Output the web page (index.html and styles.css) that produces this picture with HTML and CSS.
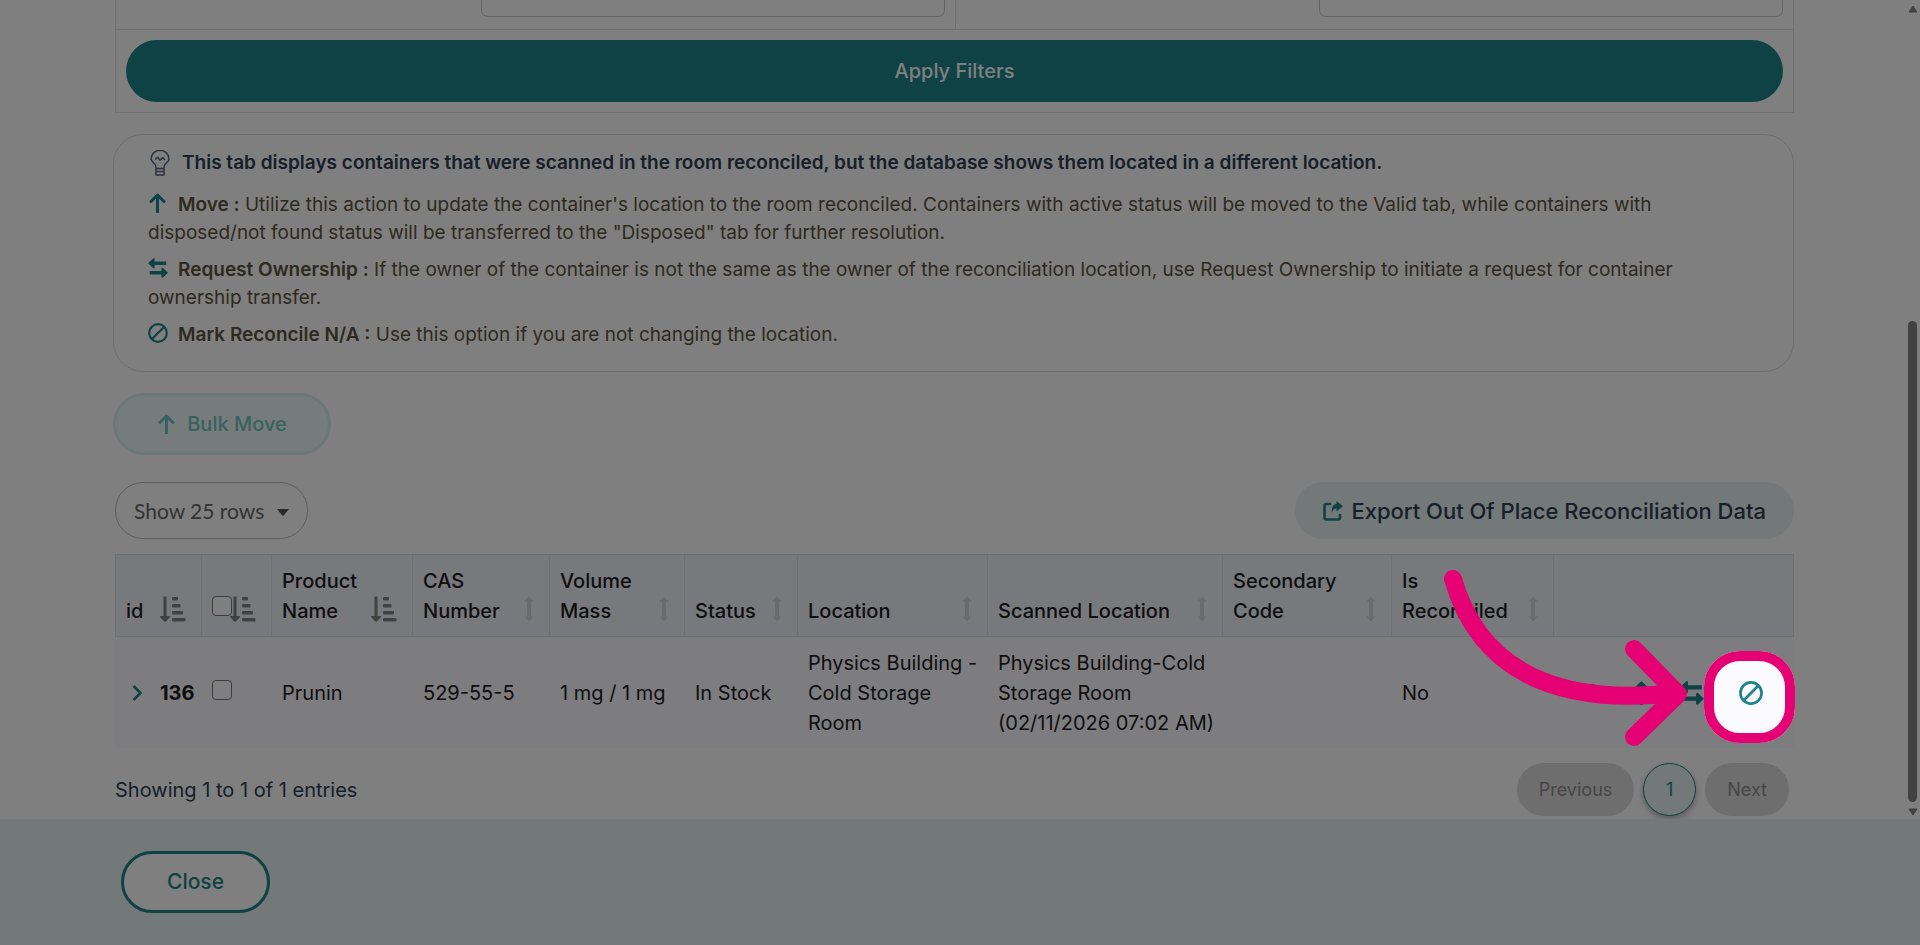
FILE: index.html
```html
<!DOCTYPE html>
<html lang="en">
<head>
    <meta charset="UTF-8">
    <meta name="viewport" content="width=device-width, initial-scale=1.0">
    <title>Out Of Place Reconciliation</title>
    <link rel="stylesheet" href="styles.css">
</head>
<body>
    <!-- shared icons -->
    <svg class="sprite" aria-hidden="true">
        <symbol id="icon-up" viewBox="0 0 20 20"><path d="M9.500 19V3M3 8.500 9.500 2l6.500 6.500" fill="none" stroke="currentColor" stroke-width="3" stroke-linecap="round" stroke-linejoin="round"/></symbol>
        <symbol id="icon-swap" viewBox="0 0 20 20"><path d="M0 5.300 5 .5c.8-.6 1.600-.2 1.600.7v2.300h11.600v3.600H6.600v2.300c0 .9-.8 1.200-1.600.6zM20 14.700l-5 4.800c-.8.6-1.600.2-1.600-.7v-2.300H1.800v-3.600h11.600v-2.300c0-.9.800-1.200 1.600-.6z" fill="currentColor"/></symbol>
        <symbol id="icon-ban" viewBox="0 0 20 20"><path d="M4.200 15.800 15.800 4.200" stroke="currentColor" stroke-width="2.200"/><circle cx="10" cy="10" r="8.800" fill="none" stroke="currentColor" stroke-width="2.200"/></symbol>
        <symbol id="icon-sort-amount" viewBox="0 0 26 26"><path d="M3.500 0.500h3v19.500h3.200c.6 0 .8.500.4 1l-4.200 4.500c-.5.500-1.200.5-1.700 0L0 21c-.4-.5-.2-1 .4-1h3.100z" fill="currentColor"/><rect x="12" y="1" width="6" height="3.500" rx="1" fill="currentColor"/><rect x="12" y="8" width="8.500" height="3.500" rx="1" fill="currentColor"/><rect x="12" y="15" width="11" height="3.500" rx="1" fill="currentColor"/><rect x="12" y="22" width="13.500" height="3.500" rx="1" fill="currentColor"/></symbol>
        <symbol id="icon-sort" viewBox="0 0 10 26"><path d="M5 .5 9.600 5.500H7v15h2.600L5 25.500.4 20.500H3v-15H.4z" fill="currentColor"/></symbol>
        <symbol id="icon-eye" viewBox="0 0 24 24"><circle cx="12" cy="12" r="7.500" fill="none" stroke="currentColor" stroke-width="3"/></symbol>
    </svg>

    <main class="content">
        <div class="page">
            <div class="filters">
                <div class="filter-row">
                    <div class="filter-cell"><input type="text" class="filter-input" aria-label="First filter"></div>
                    <div class="filter-cell"><input type="text" class="filter-input" aria-label="Second filter"></div>
                </div>
                <div class="filter-submit">
                    <button type="button" class="btn btn-apply">Apply Filters</button>
                </div>
            </div>

            <section class="info">
                <h2 class="info-title">
                    <svg class="bulb" viewBox="0 0 20 26" fill="none" stroke="currentColor" stroke-width="1.500" stroke-linejoin="round"><path d="M6 18.500v-1.500c0-2-1-2.600-2.600-4.300A8.600 8.600 0 0 1 1 9a8.900 8.600 0 0 1 18 0c0 1.600-1 2.800-2.400 3.700C15 14.400 14 15 14 17v1.500zM6 18.500V25h8v-6.500M6 21.500h8M5 9.500l2.700-2.200 2.300 3 2.700-2.700L15 10"/></svg>
                    This tab displays containers that were scanned in the room reconciled, but the database shows them located in a different location.
                </h2>
                <p><svg class="info-icon"><use href="#icon-up"/></svg><b>Move :</b> Utilize this action to update the container's location to the room reconciled. Containers with active status will be moved to the Valid tab, while containers with disposed/not found status will be transferred to the "Disposed" tab for further resolution.</p>
                <p><svg class="info-icon"><use href="#icon-swap"/></svg><b>Request Ownership :</b> If the owner of the container is not the same as the owner of the reconciliation location, use Request Ownership to initiate a request for container ownership transfer.</p>
                <p><svg class="info-icon"><use href="#icon-ban"/></svg><b>Mark Reconcile N/A :</b> Use this option if you are not changing the location.</p>
            </section>

            <button type="button" class="btn btn-bulk" disabled><svg class="info-icon"><use href="#icon-up"/></svg>Bulk Move</button>

            <div class="toolbar">
                <div class="rows-select">
                    <select aria-label="Rows per page">
                        <option>Show 25 rows</option>
                        <option>Show 50 rows</option>
                    </select>
                    <svg class="caret" viewBox="0 0 12 7"><path d="M0 0h12L6.700 6.400q-.7.800-1.400 0z" fill="currentColor"/></svg>
                </div>
                <button type="button" class="btn btn-export">
                    <svg class="share" viewBox="0 0 20 20"><path d="M7 3H3.500Q1.500 3 1.500 5v11.500q0 2 2 2h11.500q2 0 2-2V14" fill="none" stroke="currentColor" stroke-width="2.600" stroke-linecap="round"/><path d="M13.500 0 20 5.200l-6.500 5.300V7.400c-2.300 0-3.600 1-4.500 4.600-1-5 1.200-8.700 4.500-8.900z" fill="currentColor"/></svg>
                    Export Out Of Place Reconciliation Data
                </button>
            </div>

            <table class="data">
                <colgroup>
                    <col class="c-id"><col class="c-check"><col class="c-name"><col class="c-cas"><col class="c-volume"><col class="c-status"><col class="c-location"><col class="c-scanned"><col class="c-code"><col class="c-reconciled"><col>
                </colgroup>
                <thead>
                    <tr>
                        <th><div class="head">id<svg class="sorted"><use href="#icon-sort-amount"/></svg></div></th>
                        <th><div class="head head-check"><input type="checkbox" aria-label="Select all"><svg class="sorted"><use href="#icon-sort-amount"/></svg></div></th>
                        <th><div class="head">Product Name<svg class="sorted"><use href="#icon-sort-amount"/></svg></div></th>
                        <th><div class="head">CAS<br>Number<svg class="sort"><use href="#icon-sort"/></svg></div></th>
                        <th><div class="head">Volume<br>Mass<svg class="sort"><use href="#icon-sort"/></svg></div></th>
                        <th><div class="head">Status<svg class="sort"><use href="#icon-sort"/></svg></div></th>
                        <th><div class="head">Location<svg class="sort"><use href="#icon-sort"/></svg></div></th>
                        <th><div class="head">Scanned Location<svg class="sort"><use href="#icon-sort"/></svg></div></th>
                        <th><div class="head">Secondary<br>Code<svg class="sort"><use href="#icon-sort"/></svg></div></th>
                        <th><div class="head">Is<br>Reconciled<svg class="sort"><use href="#icon-sort"/></svg></div></th>
                        <th></th>
                    </tr>
                </thead>
                <tbody>
                    <tr>
                        <td><div class="row-id"><svg class="chevron" viewBox="0 0 10 16"><path d="M1.500 1 8.500 8l-7 7" fill="none" stroke="currentColor" stroke-width="2.500"/></svg><b>136</b></div></td>
                        <td><input type="checkbox" class="row-check" aria-label="Select 136"></td>
                        <td>Prunin</td>
                        <td>529-55-5</td>
                        <td class="nowrap">1 mg / 1 mg</td>
                        <td class="nowrap">In Stock</td>
                        <td class="nowrap">Physics Building -<br>Cold Storage<br>Room</td>
                        <td class="nowrap">Physics Building-Cold<br>Storage Room<br>(02/11/2026 07:02 AM)</td>
                        <td></td>
                        <td>No</td>
                        <td>
                            <div class="actions">
                                <button type="button" aria-label="View"><svg><use href="#icon-eye"/></svg></button>
                                <button type="button" aria-label="Move"><svg><use href="#icon-up"/></svg></button>
                                <button type="button" aria-label="Request Ownership"><svg><use href="#icon-swap"/></svg></button>
                                <button type="button" class="action-ban" aria-label="Mark Reconcile N/A"><svg><use href="#icon-ban"/></svg></button>
                            </div>
                        </td>
                    </tr>
                </tbody>
            </table>

            <div class="pager">
                <span>Showing 1 to 1 of 1 entries</span>
                <nav class="pages">
                    <button type="button" class="page-btn" disabled>Previous</button>
                    <button type="button" class="page-btn current">1</button>
                    <button type="button" class="page-btn" disabled>Next</button>
                </nav>
            </div>
        </div>

        <div class="scrollbar">
            <svg viewBox="0 0 10 8"><path d="M5 1 9 7H1z" fill="currentColor" stroke="currentColor" stroke-linejoin="round"/></svg>
            <div class="track"><div class="thumb"></div></div>
            <svg viewBox="0 0 10 8"><path d="M5 7 1 1h8z" fill="currentColor" stroke="currentColor" stroke-linejoin="round"/></svg>
        </div>
    </main>

    <footer class="footer">
        <button type="button" class="btn btn-close">Close</button>
    </footer>

    <!-- guide step drawn over the page -->
    <div class="guide">
        <div class="spotlight"></div>
        <svg class="pointer" viewBox="0 0 260 190" fill="none" stroke="#e50074" stroke-width="18" stroke-linecap="round" stroke-linejoin="round"><path d="M13 19C38 106 110 147 236 133M194 89l44 45-44 43"/></svg>
    </div>
</body>
</html>
```

FILE: styles.css
```css
* {
    box-sizing: border-box;
}
body {
    margin: 0;
    height: 100vh;
    display: flex;
    flex-direction: column;
    overflow: hidden;
    background-color: #fff;
    color: #1c1c1c;
    font-family: Inter, "Liberation Sans", sans-serif;
    font-size: 20px;
    line-height: 30px;
}
.sprite {
    display: none;
}
button,
select {
    font: inherit;
    color: inherit;
    cursor: pointer;
}

.content {
    flex: 1;
    min-height: 0;
    display: flex;
    overflow: hidden;
}
.page {
    flex: 1;
    padding: 0 112px 0 115px;
}

/* filters */
.filters {
    border: 1px solid #e0e1e3;
    border-top: none;
}
.filter-row {
    display: grid;
    grid-template-columns: 1fr 1fr;
    border-bottom: 1px solid #e0e1e3;
}
.filter-cell {
    display: flex;
    justify-content: flex-end;
    padding: 0 10px 12px;
}
.filter-cell + .filter-cell {
    border-left: 1px solid #e0e1e3;
}
.filter-input {
    width: 464px;
    height: 17px;
    background: #fff;
    border: 1px solid #c6c9d1;
    border-top: none;
    border-radius: 0 0 7px 7px;
}
.filter-submit {
    padding: 10px;
}

.btn {
    display: inline-flex;
    align-items: center;
    justify-content: center;
    height: 62px;
    border: none;
    border-radius: 31px;
    font-weight: 500;
}
.btn-apply {
    width: 100%;
    background-color: #1c848a;
    color: #fff;
}

/* explanation box */
.info {
    margin: 21px 0 21px -2px;
    padding: 14px 60px 22px 34px;
    border: 1px solid #dadbe0;
    border-radius: 30px;
    color: #5c5440;
    font-size: 19px;
    line-height: 28px;
}
.info p {
    margin: 0 0 9px;
}
.info p:last-child {
    margin: 0;
}
.info-title {
    display: flex;
    align-items: center;
    gap: 12px;
    margin: 0 0 14px;
    color: #2e4055;
    font-size: 19px;
    font-weight: 600;
    white-space: nowrap;
}
.info b {
    font-weight: 600;
}
.bulb {
    width: 20px;
    height: 26px;
    margin-left: 2px;
    color: #58657c;
}
.info-icon {
    width: 20px;
    height: 20px;
    margin-right: 10px;
    vertical-align: -2px;
    color: #1c848a;
}

.btn-bulk {
    width: 218px;
    margin-left: -2px;
    border: 3px solid #d7f0ee;
    background-color: #ecf6f6;
    color: #74c2c3;
}
.btn-bulk .info-icon {
    color: inherit;
}

/* table toolbar */
.toolbar {
    display: flex;
    justify-content: space-between;
    margin: 27px 0 15px;
}
.rows-select {
    position: relative;
}
.rows-select select {
    appearance: none;
    width: 193px;
    height: 57px;
    padding: 0 18px;
    border: 1px solid #bbb;
    border-radius: 28px;
    background: #fff;
    color: #666;
    font-family: Lato, sans-serif;
    font-size: 21px;
}
.caret {
    position: absolute;
    right: 19px;
    top: 27px;
    width: 12px;
    height: 7px;
    color: #555;
    pointer-events: none;
}
.btn-export {
    gap: 8px;
    height: 57px;
    padding: 0 28px;
    background-color: #e4f2f0;
    color: #2e4055;
    font-size: 22px;
}
.share {
    width: 20px;
    height: 20px;
    color: #1c848a;
}

/* data table */
.data {
    width: 100%;
    table-layout: fixed;
    border-collapse: separate;
    border-spacing: 0;
}
.c-id { width: 86px; }
.c-check { width: 70px; }
.c-name { width: 141px; }
.c-cas { width: 137px; }
.c-volume { width: 135px; }
.c-status { width: 113px; }
.c-location { width: 190px; }
.c-scanned { width: 235px; }
.c-code { width: 169px; }
.c-reconciled { width: 162px; }
.data th {
    padding: 11px 15px 10px 10px;
    border: 1px solid #dfe0e4;
    border-right: none;
    background-color: #f0f2fa;
    font-weight: 500;
    text-align: left;
    vertical-align: bottom;
}
.data th:last-child {
    border-right: 1px solid #dfe0e4;
}
.data td {
    padding: 11px 0 10px 11px;
    background-color: #fafaff;
    vertical-align: middle;
}
.head {
    position: relative;
    padding-right: 20px;
}
.head-check {
    height: 30px;
}
.sorted,
.sort {
    position: absolute;
    right: 0;
    bottom: 4px;
    width: 26px;
    height: 26px;
    color: #828282;
}
.sort {
    width: 10px;
    color: #d6d7dc;
}
.nowrap {
    white-space: nowrap;
}
.data input {
    appearance: none;
    display: block;
    width: 20px;
    height: 20px;
    margin: 0;
    border: 1px solid #767676;
    border-radius: 4px;
    background: #fff;
}
.head-check input {
    margin-top: 3px;
}
.data .row-check {
    margin-bottom: 6px;
}
.row-id {
    display: flex;
    align-items: center;
    gap: 18px;
    padding-left: 6px;
}
.row-id b {
    font-weight: 700;
}
.chevron {
    width: 10px;
    height: 16px;
    color: #1c848a;
}
.actions {
    display: flex;
    justify-content: flex-end;
    gap: 26px;
    padding-right: 31px;
}
.actions button {
    padding: 0;
    border: none;
    background: none;
    color: #1c848a;
}
.actions svg {
    display: block;
    width: 24px;
    height: 24px;
}
.actions .action-ban {
    margin-left: 9px;
}

.pager {
    display: flex;
    align-items: center;
    justify-content: space-between;
    margin-top: 15px;
    color: #2e4055;
}
.pages {
    display: flex;
    gap: 9px;
    padding-right: 5px;
}
.page-btn {
    height: 53px;
    padding: 0 22px;
    border: none;
    border-radius: 27px;
    background-color: #ddd;
    color: #8c8c8c;
    font-size: 18px;
}
.page-btn.current {
    width: 53px;
    padding: 0;
    border: 1px solid #1c848a;
    background-color: #e4f2f0;
    color: #1c848a;
    box-shadow: 0 3px 6px rgba(0, 0, 0, 0.3);
}

.scrollbar {
    width: 13px;
    margin-right: 1px;
    padding: 5px 0 3px;
    display: flex;
    flex-direction: column;
    align-items: center;
    color: #828282;
}
.scrollbar svg {
    width: 10px;
    height: 8px;
}
.track {
    flex: 1;
    display: flex;
    flex-direction: column;
    justify-content: flex-end;
    padding-bottom: 6px;
}
.thumb {
    width: 9px;
    height: 61%;
    border-radius: 5px;
    background-color: #828282;
}

.footer {
    display: flex;
    align-items: center;
    height: 126px;
    padding-left: 121px;
    background-color: #e4f2f0;
}
.btn-close {
    width: 149px;
    border: 3px solid #1c848a;
    background-color: #fff;
    color: #1c848a;
    font-size: 21px;
}

/* guide: everything outside the spotlight is dimmed */
.guide {
    position: fixed;
    inset: 0;
    overflow: hidden;
}
.spotlight {
    position: absolute;
    top: 651px;
    right: 125px;
    width: 91px;
    height: 92px;
    border: 10px solid #e50074;
    border-radius: 36px;
    box-shadow: 0 0 0 2500px rgba(0, 0, 0, 0.5);
}
.pointer {
    position: absolute;
    top: 560px;
    right: 220px;
    width: 260px;
    height: 190px;
}
```
